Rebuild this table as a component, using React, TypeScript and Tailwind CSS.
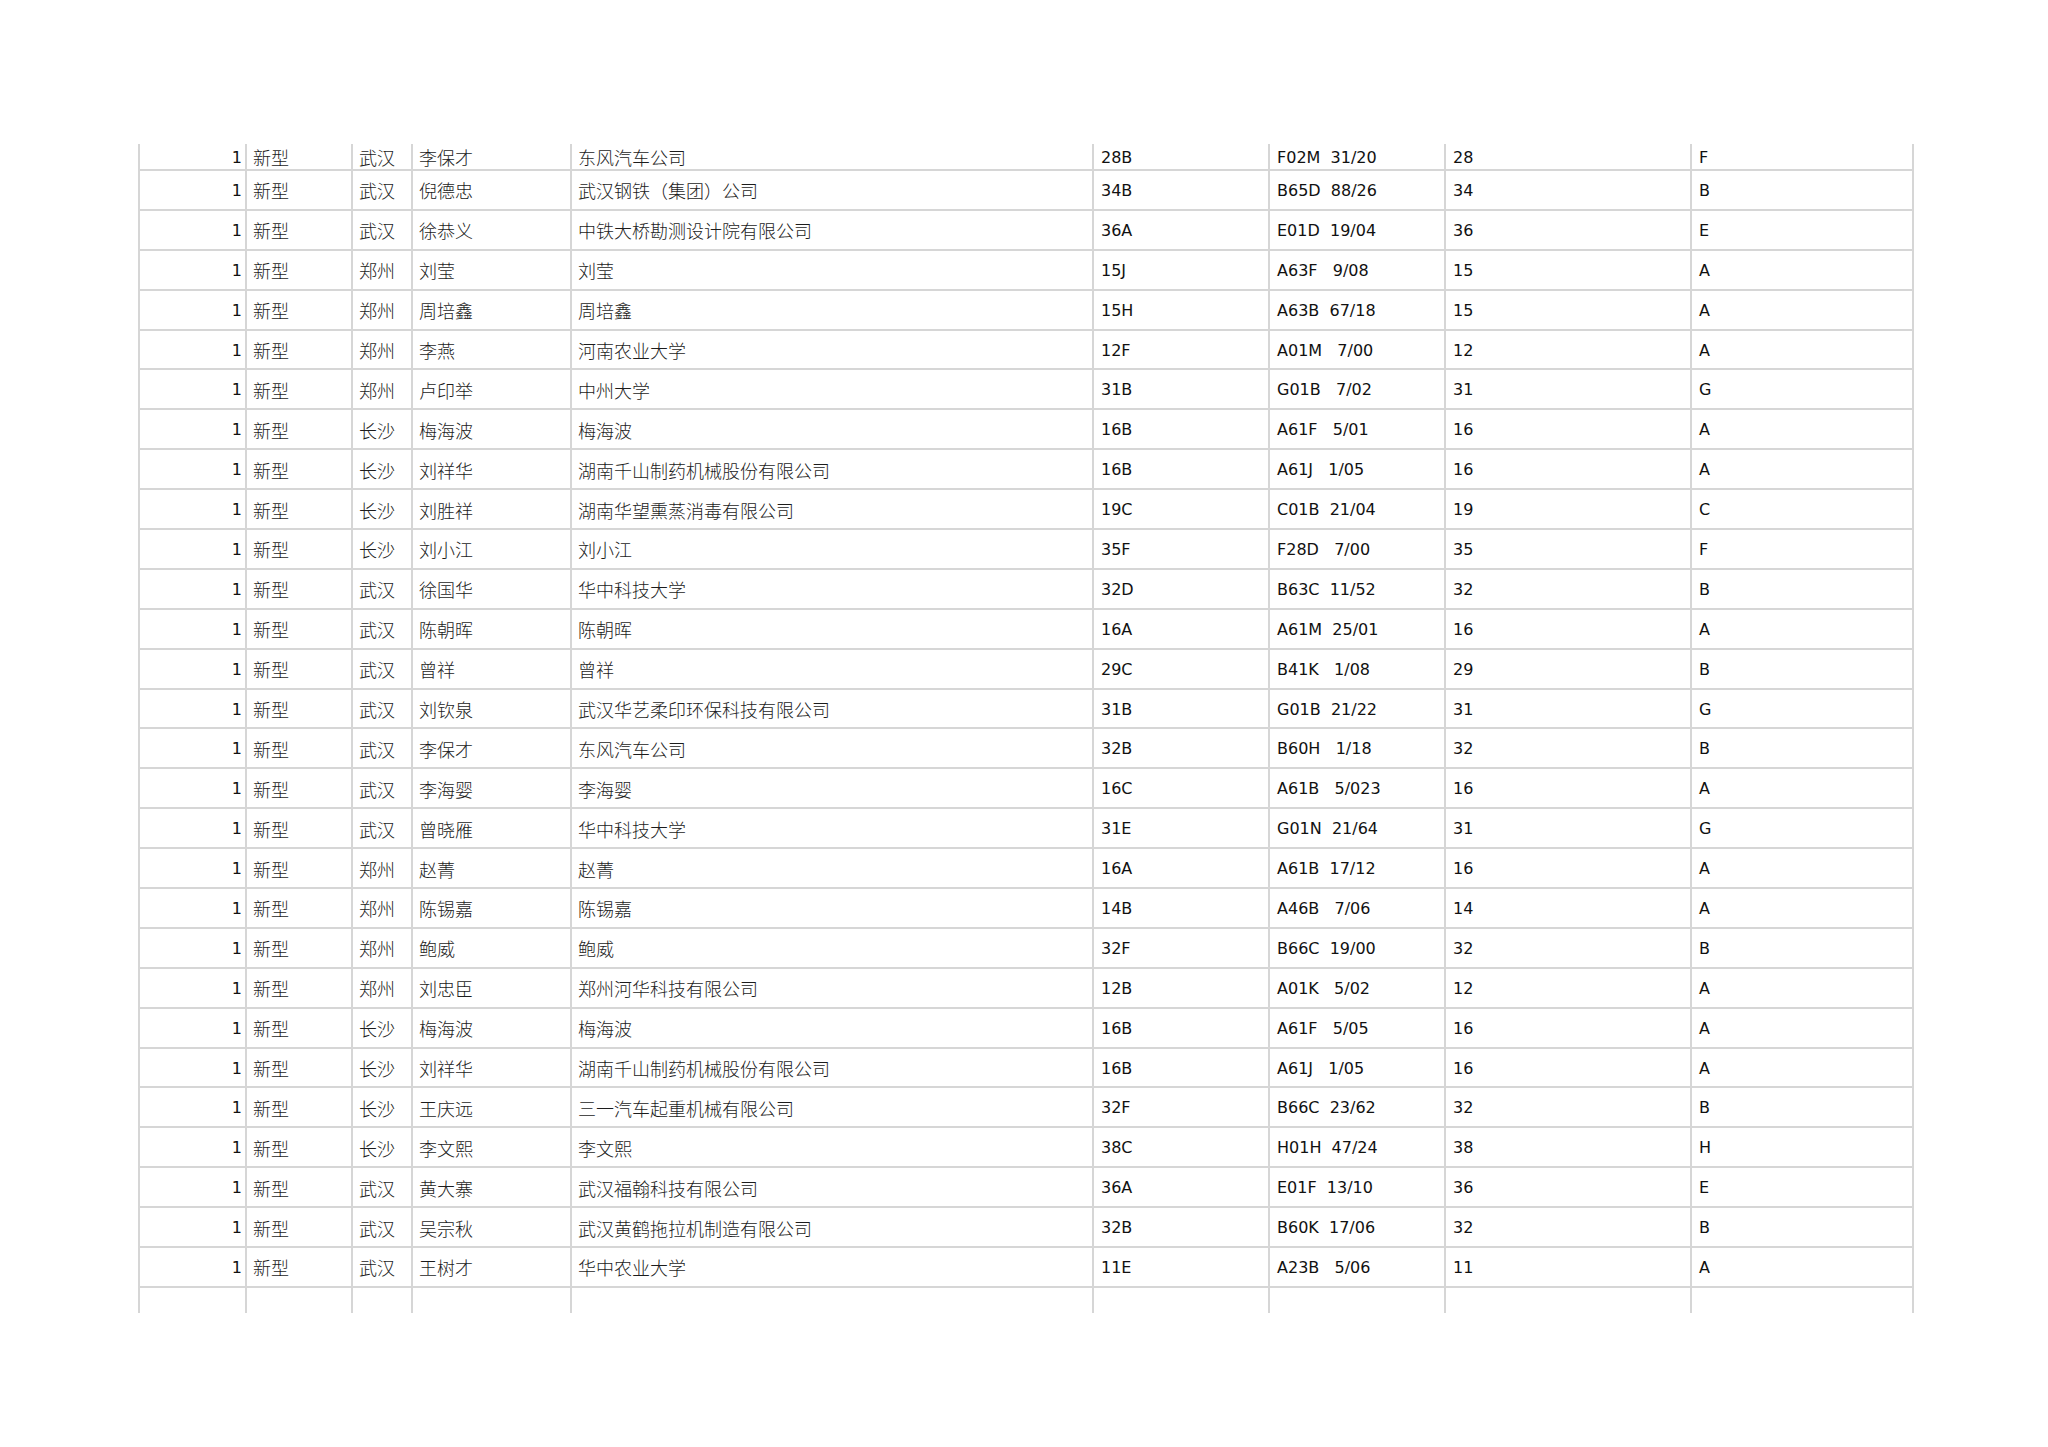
import React from "react";

type Row = [string, string, string, string, string, string, string];

const rows: Row[] = [
  ["武汉", "李保才", "东风汽车公司", "28B", "F02M  31/20", "28", "F"],
  ["武汉", "倪德忠", "武汉钢铁（集团）公司", "34B", "B65D  88/26", "34", "B"],
  ["武汉", "徐恭义", "中铁大桥勘测设计院有限公司", "36A", "E01D  19/04", "36", "E"],
  ["郑州", "刘莹", "刘莹", "15J", "A63F   9/08", "15", "A"],
  ["郑州", "周培鑫", "周培鑫", "15H", "A63B  67/18", "15", "A"],
  ["郑州", "李燕", "河南农业大学", "12F", "A01M   7/00", "12", "A"],
  ["郑州", "卢印举", "中州大学", "31B", "G01B   7/02", "31", "G"],
  ["长沙", "梅海波", "梅海波", "16B", "A61F   5/01", "16", "A"],
  ["长沙", "刘祥华", "湖南千山制药机械股份有限公司", "16B", "A61J   1/05", "16", "A"],
  ["长沙", "刘胜祥", "湖南华望熏蒸消毒有限公司", "19C", "C01B  21/04", "19", "C"],
  ["长沙", "刘小江", "刘小江", "35F", "F28D   7/00", "35", "F"],
  ["武汉", "徐国华", "华中科技大学", "32D", "B63C  11/52", "32", "B"],
  ["武汉", "陈朝晖", "陈朝晖", "16A", "A61M  25/01", "16", "A"],
  ["武汉", "曾祥", "曾祥", "29C", "B41K   1/08", "29", "B"],
  ["武汉", "刘钦泉", "武汉华艺柔印环保科技有限公司", "31B", "G01B  21/22", "31", "G"],
  ["武汉", "李保才", "东风汽车公司", "32B", "B60H   1/18", "32", "B"],
  ["武汉", "李海婴", "李海婴", "16C", "A61B   5/023", "16", "A"],
  ["武汉", "曾晓雁", "华中科技大学", "31E", "G01N  21/64", "31", "G"],
  ["郑州", "赵菁", "赵菁", "16A", "A61B  17/12", "16", "A"],
  ["郑州", "陈锡嘉", "陈锡嘉", "14B", "A46B   7/06", "14", "A"],
  ["郑州", "鲍威", "鲍威", "32F", "B66C  19/00", "32", "B"],
  ["郑州", "刘忠臣", "郑州河华科技有限公司", "12B", "A01K   5/02", "12", "A"],
  ["长沙", "梅海波", "梅海波", "16B", "A61F   5/05", "16", "A"],
  ["长沙", "刘祥华", "湖南千山制药机械股份有限公司", "16B", "A61J   1/05", "16", "A"],
  ["长沙", "王庆远", "三一汽车起重机械有限公司", "32F", "B66C  23/62", "32", "B"],
  ["长沙", "李文熙", "李文熙", "38C", "H01H  47/24", "38", "H"],
  ["武汉", "黄大寨", "武汉福翰科技有限公司", "36A", "E01F  13/10", "36", "E"],
  ["武汉", "吴宗秋", "武汉黄鹤拖拉机制造有限公司", "32B", "B60K  17/06", "32", "B"],
  ["武汉", "王树才", "华中农业大学", "11E", "A23B   5/06", "11", "A"],
];

const gridCols =
  "grid grid-cols-[107px_106px_60px_159px_522px_176px_176px_246px_222px]";

const cellBase = "border-r-2 border-[#d6d6d6] flex items-center pt-[2px] overflow-hidden whitespace-pre";
const cjk = "font-['Noto_Sans_CJK_SC',sans-serif] font-light text-[18px] text-[#1c1c1c] pl-[6px]";
const lat = "font-['DejaVu_Sans',sans-serif] text-[16px] text-[#111] pl-[7px]";

function DataRow({ r, first }: { r: Row; first: boolean }) {
  const h = first ? "h-[27px]" : "h-[39.9px]";
  return (
    <div className={`${gridCols} ${h} border-b-2 border-[#d6d6d6]`}>
      <div className={`${cellBase} justify-end pr-[3px] font-['DejaVu_Sans',sans-serif] text-[16px] text-[#111]`}>1</div>
      <div className={`${cellBase} ${cjk}`}>新型</div>
      <div className={`${cellBase} ${cjk}`}>{r[0]}</div>
      <div className={`${cellBase} ${cjk}`}>{r[1]}</div>
      <div className={`${cellBase} ${cjk}`}>{r[2]}</div>
      <div className={`${cellBase} ${lat}`}>{r[3]}</div>
      <div className={`${cellBase} ${lat}`}>{r[4]}</div>
      <div className={`${cellBase} ${lat}`}>{r[5]}</div>
      <div className={`${cellBase} ${lat}`}>{r[6]}</div>
    </div>
  );
}

export default function App() {
  return (
    <div className="w-[2048px] h-[1447px] bg-white pt-[144px] pl-[138px] overflow-hidden">
      <div className="w-[1776px] border-l-2 border-[#d6d6d6]">
        {rows.map((r, i) => (
          <DataRow key={i} r={r} first={i === 0} />
        ))}
        <div className={`${gridCols} h-[25px]`}>
          {Array.from({ length: 9 }).map((_, i) => (
            <div key={i} className="border-r-2 border-[#d6d6d6]" />
          ))}
        </div>
      </div>
    </div>
  );
}
